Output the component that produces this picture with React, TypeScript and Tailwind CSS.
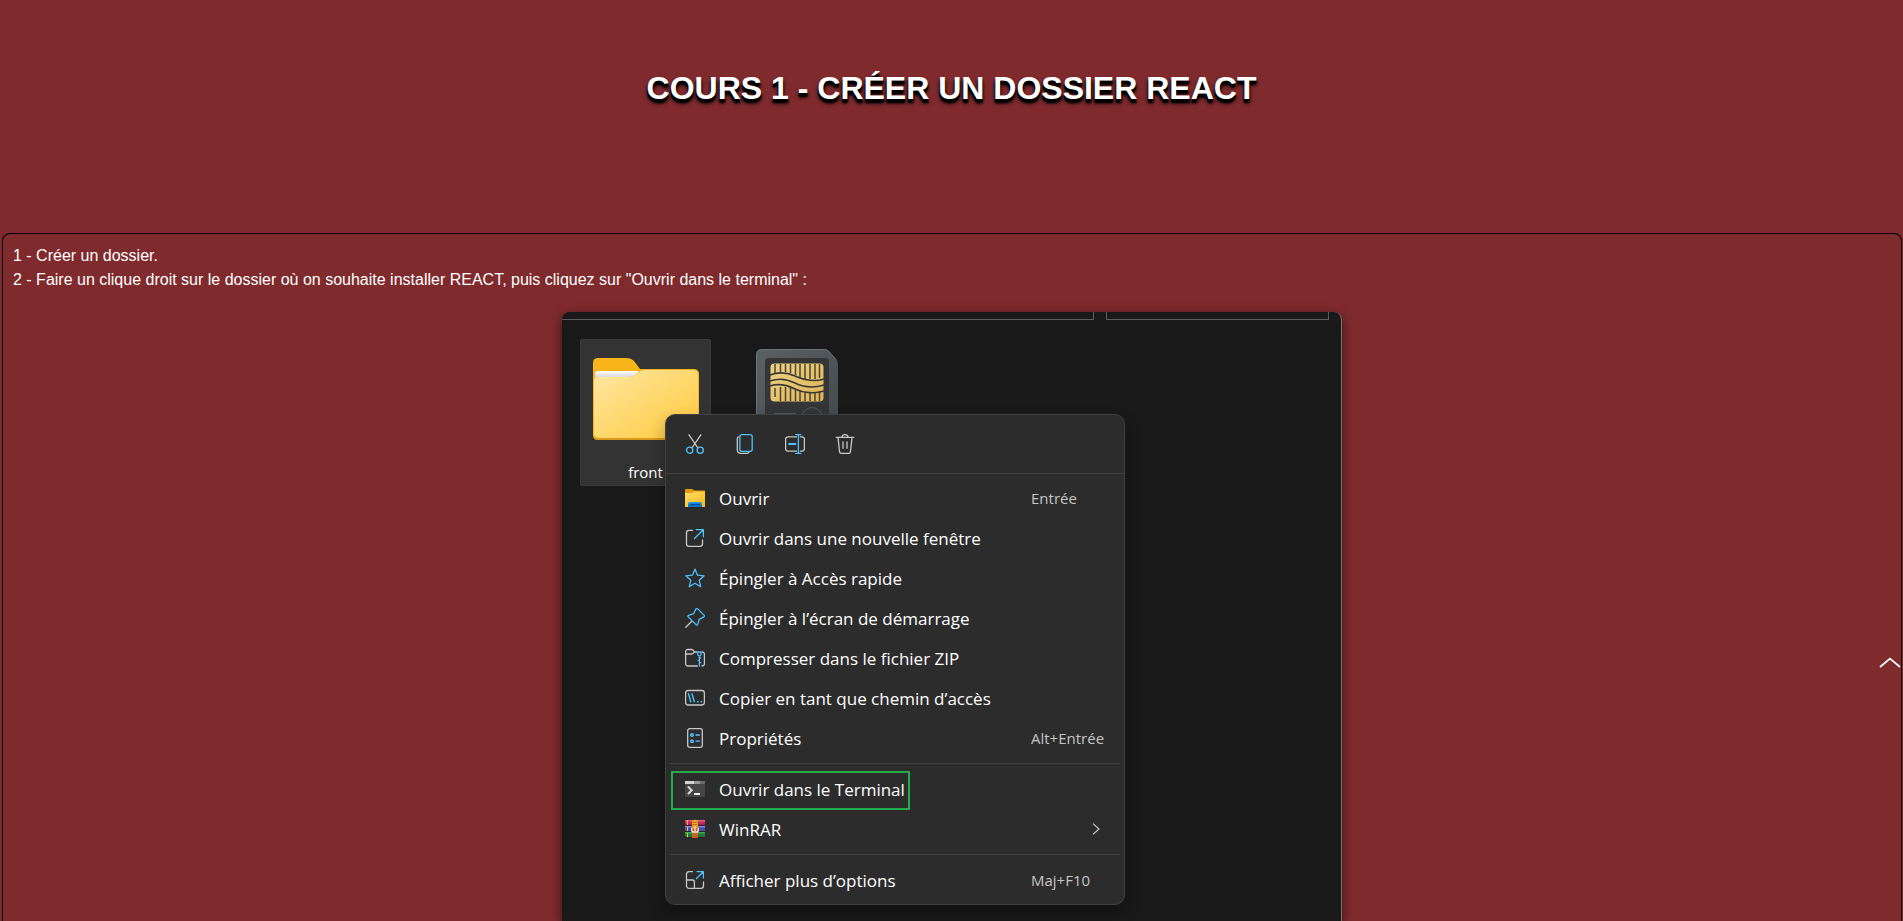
import type { ReactNode } from "react";

const ice = "#4cc2ff";
const ash = "#c8c8c8";

function Icon({ children }: { children: ReactNode }) {
  return (
    <svg viewBox="0 0 20 20" className="size-5 shrink-0" fill="none" strokeWidth="1.3" strokeLinecap="round" strokeLinejoin="round" aria-hidden="true">
      {children}
    </svg>
  );
}

const CutIcon = () => (
  <Icon>
    <path d="M4 .8 12.9 14M15.8.8 7 14" stroke={ash} />
    <circle cx="4.7" cy="16.2" r="3.1" stroke={ice} />
    <circle cx="15.2" cy="16.2" r="3.1" stroke={ice} />
  </Icon>
);

const CopyIcon = () => (
  <Icon>
    <path d="M3.4 2.9C2.5 3.3 2.3 4 2.3 5v10.5c0 2.3 1.4 3.9 3.8 3.9h5.5c1.2 0 1.9-.4 2.3-1.2" stroke={ash} />
    <rect x="4.9" y=".7" width="12.3" height="16.6" rx="2" stroke={ice} />
  </Icon>
);

const RenameIcon = () => (
  <Icon>
    <path d="M11.4 2.8H3A2.4 2.4 0 0 0 .6 5.2v9.6A2.4 2.4 0 0 0 3 17.2h8.4M15.4 2.8H17a2.4 2.4 0 0 1 2.4 2.4v9.6a2.4 2.4 0 0 1-2.4 2.4h-1.6" stroke={ash} />
    <path d="M10.9.6h5M10.9 19.4h5M13.4.6v18.8" stroke={ice} />
    <path d="M4 10h6.5" stroke={ice} strokeWidth="1.8" />
  </Icon>
);

const DeleteIcon = () => (
  <Icon>
    <path d="M1.2 3.3h17.6M6.8 3.1C7 1.5 8.200.6 10 .6s3 .9 3.200 2.500M3 3.5l1.500 14c.1 1.2.9 1.9 2 1.9h7c1.1 0 1.9-.7 2-1.9l1.500-14M8 8v6.300M12 8v6.300" stroke={ash} />
  </Icon>
);

const FolderOpenIcon = () => (
  <Icon>
    <defs>
      <linearGradient id="small-folder" x1="0" y1="0" x2="1" y2="1">
        <stop offset="0" stopColor="#ffdc6a" />
        <stop offset="1" stopColor="#fbb917" />
      </linearGradient>
      <linearGradient id="blue-tray" x1="0" y1="0" x2="0" y2="1">
        <stop offset="0" stopColor="#1e96e6" />
        <stop offset="1" stopColor="#0a6cc4" />
      </linearGradient>
    </defs>
    <path d="M0 1.5Q0 1 .7 1h6.500l2 1.400H20V6H0z" fill="#e09b05" />
    <path d="M0 5h7l1.800-1.400H20V19H0z" fill="url(#small-folder)" />
    <path d="M3 19v-3q0-2 2-2h10q2 0 2 2v3z" fill="url(#blue-tray)" />
    <path d="M5.500 16.600h9" stroke="#06458a" strokeWidth="1" />
  </Icon>
);

const NewWindowIcon = () => (
  <Icon>
    <path d="M7.500 2.400H4A2.600 2.600 0 0 0 1.500 5v10.800A2.600 2.600 0 0 0 4 18.400h11a2.600 2.600 0 0 0 2.500-2.600V12" stroke={ash} />
    <path d="M11.200 1.600h7.200v7.200M18.200 1.800 9.500 10.500" stroke={ice} />
  </Icon>
);

const StarIcon = () => (
  <Icon>
    <path d="m10 1.200 2.600 6 6.600.6-5 4.400 1.500 6.500-5.700-3.400-5.700 3.400 1.500-6.500-5-4.400 6.600-.6z" stroke={ice} />
  </Icon>
);

const PinIcon = () => (
  <Icon>
    <path d="M.8 19.200 6.500 13.500" stroke={ash} />
    <path d="M11 .9c.5-.5 1.300-.5 1.800 0l6.200 6.200c.6.6.5 1.400-.2 1.800l-4.600 2.500-1.500 5c-.3.900-.9 1-1.500.4L3.200 8.900c-.6-.6-.4-1.300.4-1.500l5-1.700z" stroke={ice} />
  </Icon>
);

const ZipIcon = () => (
  <Icon>
    <path d="M12 4H9.500L8 2.200C7.600 1.700 7 1.500 6.400 1.500H2.800A2.200 2.200 0 0 0 .6 3.700v12.100A2.200 2.200 0 0 0 2.800 18h9.500M.7 6h6c1.200 0 1.700-.5 2.600-1.800M17 4a2.300 2.300 0 0 1 2.400 2.200v9.600A2.200 2.200 0 0 1 17.200 18H17" stroke={ash} />
    <path d="M12.800 4v2.500c0 1 .5 1.500 1.600 1.500s1.600-.5 1.600-1.500V4zM14.400 8v10M14.400 10h1.400M13 12.300h1.400M14.400 14.700h1.400" stroke={ice} />
  </Icon>
);

const PathIcon = () => (
  <Icon>
    <rect x=".6" y="2.500" width="18.800" height="14.500" rx="2.400" stroke={ash} />
    <path d="m3.500 5.800 2.300 8M7 5.800l2.300 8M12.500 13.800h.6M16 13.800h.6" stroke={ice} strokeWidth="1.400" />
  </Icon>
);

const PropertiesIcon = () => (
  <Icon>
    <rect x="2.700" y=".6" width="14.600" height="18.800" rx="2" stroke={ash} />
    <path d="M11 7h3.500M11 13.200h3.500" stroke={ice} />
    <circle cx="7" cy="7" r="1.300" stroke={ice} strokeWidth="1.500" />
    <circle cx="7" cy="13.200" r="1.300" stroke={ice} strokeWidth="1.500" />
  </Icon>
);

const TerminalIcon = () => (
  <Icon>
    <path d="M0 2h20v16H0z" fill="#454545" />
    <path d="M0 2h9.500v3H0z" fill="#d2d2d2" />
    <path d="M9.500 2H15v3H9.500z" fill="#9a9a9a" />
    <path d="M15 2h5v3h-5z" fill="#6c6c6c" />
    <path d="m3 7.500 3.700 3.700L3 15" stroke="#d5d5d5" strokeWidth="2" strokeLinecap="butt" strokeLinejoin="miter" />
    <path d="M9 15h6" stroke="#fff" strokeWidth="1.800" strokeLinecap="butt" />
  </Icon>
);

const WinrarIcon = () => (
  <Icon>
    <path d="M0 1h20v6H0z" fill="#c4285c" />
    <path d="M0 1h20v1.500H0z" fill="#e65b88" />
    <path d="M0 7h20v6H0z" fill="#4a4aa8" />
    <path d="M0 7h20v1.500H0z" fill="#8283d2" />
    <path d="M0 13h20v6H0z" fill="#1b7a35" />
    <path d="M0 13h20v1.500H0z" fill="#45aa58" />
    <path d="M0 6.300h20M0 12.500h20M0 18.500h20" stroke="#251c2c" strokeWidth="1.100" strokeLinecap="butt" />
    <path d="M2.500 2v3.500M2.500 8.200v3.500M2.500 14.400v3.500" stroke="#e8c534" strokeWidth="1" />
    <path d="M7 1h6v18H7z" fill="#c9621c" />
    <path d="M7.300 1.500Q10 0 12.700 1.500V9H7.300z" fill="#efad29" />
    <path d="M8.500 3.300h3M8.500 5.600h3" stroke="#a85b10" strokeWidth=".9" />
    <path d="M6.800 9.500v2.500q0 1 1 1h4.400q1 0 1-1V9.500" stroke="#ededed" strokeWidth="1.300" />
    <path d="M10 8.500v3" stroke="#fff0b0" strokeWidth="1.300" />
  </Icon>
);

const MoreIcon = () => (
  <Icon>
    <path d="M7.500 1.600H4.200a2.600 2.600 0 0 0-2.700 2.600v11.600a2.600 2.600 0 0 0 2.600 2.600h11.800a2.600 2.600 0 0 0 2.600-2.600V12M1.500 10h6.300c1 0 1.600.6 1.600 1.600v6.800" stroke={ash} />
    <path d="M12 1.600h6.400v6.500M18 2l-6.500 6.500" stroke={ice} />
  </Icon>
);

function FolderPicture() {
  return (
    <svg viewBox="0 0 106 84" className="h-[84px] w-[106px]" aria-hidden="true">
      <defs>
        <linearGradient id="folder-front" x1="0" y1="0" x2="1" y2="1">
          <stop offset="0" stopColor="#ffe7a2" />
          <stop offset="1" stopColor="#ffc93c" />
        </linearGradient>
        <linearGradient id="folder-paper" x1="0" y1="0" x2="0" y2="1">
          <stop offset="0" stopColor="#fff" />
          <stop offset="1" stopColor="#d9d9d9" />
        </linearGradient>
      </defs>
      <path d="M0 6Q0 1 5 1h28q5 0 8 3l6 8h53q6 0 6 5v61q0 5-5 5H5q-5 0-5-5z" fill="#f9b51a" />
      <path d="M2 17q0-3 3-3h41q-4 6-11 6H2z" fill="url(#folder-paper)" />
      <path d="M1 24q0-4 4-4h31q5 0 9-4 3-3 7-3h48q5 0 5 4v60q0 4-4 4H5q-4 0-4-4z" fill="url(#folder-front)" />
      <path d="M1 78q1 5 5 5h94q4 0 5-5-1 3-5 3H6q-4 0-5-3z" fill="#d99a1a" />
    </svg>
  );
}

function CardPicture() {
  return (
    <svg viewBox="0 0 84 84" className="h-[84px] w-[84px]" fill="none" aria-hidden="true">
      <defs>
        <linearGradient id="card-shell" x1="0" y1="0" x2="1" y2="1">
          <stop offset="0" stopColor="#5c6165" />
          <stop offset="1" stopColor="#43484d" />
        </linearGradient>
        <linearGradient id="card-chip" x1="0" y1="0" x2="1" y2="1">
          <stop offset="0" stopColor="#ecd486" />
          <stop offset="1" stopColor="#dfb356" />
        </linearGradient>
      </defs>
      <path d="M1 7q0-6 6-6h62q3 0 5 2l7 8q2 2 2 5v68H1z" fill="url(#card-shell)" />
      <path d="M1.500 84V7q0-5.500 5.500-5.500h62q3 0 5 2l7 8" stroke="#777c80" strokeWidth=".7" />
      <path d="M10 84V14q0-4 4-4h56q4 0 4 4v70z" fill="#333537" />
      <rect x="15.500" y="15.500" width="53" height="38" rx="4" fill="url(#card-chip)" />
      <path
        d="M20 16v9M25.500 16v8M30.500 16v8M35.500 16v9M40.500 16v11M45 16v14M50 16v15M55 16v15M60 16v15M64.500 16v14M20 40v9M25.500 39v14M30.500 39v14M35.500 40v13M40.500 42v11M45 43v10M50 44v9M55 44v9M60 44v9M64.500 43v10"
        stroke="#4b4534"
        strokeWidth="1.500"
      />
      <path d="M15 27c8-3 16-3 25 1s20 6 29 3M15 33c9-3 17-2 25 2s19 5 29 2M15 38c9-3 17-1 25 3s20 5 29 2" stroke="#3b3935" strokeWidth="1.600" />
      <path d="M19 65.500h22" stroke="#55585a" />
      <circle cx="57" cy="70" r="10.500" stroke="#55585a" />
    </svg>
  );
}

type Entry = { label: string; icon: ReactNode; shortcut?: string; arrow?: boolean; framed?: boolean };

const groups: Entry[][] = [
  [
    { label: "Ouvrir", icon: <FolderOpenIcon />, shortcut: "Entrée" },
    { label: "Ouvrir dans une nouvelle fenêtre", icon: <NewWindowIcon /> },
    { label: "Épingler à Accès rapide", icon: <StarIcon /> },
    { label: "Épingler à l’écran de démarrage", icon: <PinIcon /> },
    { label: "Compresser dans le fichier ZIP", icon: <ZipIcon /> },
    { label: "Copier en tant que chemin d’accès", icon: <PathIcon /> },
    { label: "Propriétés", icon: <PropertiesIcon />, shortcut: "Alt+Entrée" },
  ],
  [
    { label: "Ouvrir dans le Terminal", icon: <TerminalIcon />, framed: true },
    { label: "WinRAR", icon: <WinrarIcon />, arrow: true },
  ],
  [{ label: "Afficher plus d’options", icon: <MoreIcon />, shortcut: "Maj+F10" }],
];

const tools = [
  { label: "Couper", icon: <CutIcon /> },
  { label: "Copier", icon: <CopyIcon /> },
  { label: "Renommer", icon: <RenameIcon /> },
  { label: "Supprimer", icon: <DeleteIcon /> },
];

function MenuRow({ entry }: { entry: Entry }) {
  return (
    <li className="relative">
      <button type="button" className="flex h-10 w-full items-center gap-3.5 pl-[19px] text-left">
        {entry.icon}
        <span className="grow pt-0.5 text-[17px] text-white">{entry.label}</span>
        {entry.shortcut && <span className="w-[93px] text-[15px] text-[#c4c4c4]">{entry.shortcut}</span>}
        {entry.arrow && (
          <svg viewBox="0 0 8 12" className="mr-6 h-3 w-2" fill="none" stroke={ash} strokeWidth="1.200" aria-hidden="true">
            <path d="m1 .6 6 5.400-6 5.400" />
          </svg>
        )}
      </button>
      {entry.framed && <span className="pointer-events-none absolute top-0.5 left-[5px] h-[39px] w-[239px] border-2 border-[#22ac4a]" />}
    </li>
  );
}

function ContextMenu() {
  return (
    <div className="absolute top-[102px] left-[103px] w-[460px] rounded-[10px] border border-[#404040] bg-[#2c2c2c] pb-1 shadow-[0_8px_16px_rgba(0,0,0,0.3)]">
      <div className="flex h-[59px] items-center gap-[30px] border-b border-[#404040] pl-[19px]">
        {tools.map((tool) => (
          <button key={tool.label} type="button" aria-label={tool.label}>
            {tool.icon}
          </button>
        ))}
      </div>
      <div className="pt-1">
        {groups.map((group, index) => (
          <div key={index}>
            {index > 0 && <hr className="mx-1 my-[5px] border-[#404040]" />}
            <ul>
              {group.map((entry) => (
                <MenuRow key={entry.label} entry={entry} />
              ))}
            </ul>
          </div>
        ))}
      </div>
    </div>
  );
}

function Explorer() {
  return (
    <div className="relative mx-auto mt-5 min-h-[609px] w-[780px] flex-1 rounded-t-lg border-r border-[#777] bg-[#191919] font-['Open_Sans','Noto_Sans',sans-serif] shadow-[0_4px_12px_rgba(0,0,0,0.6)]">
      <div className="flex h-2 gap-3 pr-3">
        <div className="grow border-r border-b border-[#5c5c5c]" />
        <div className="w-[223px] border border-t-0 border-[#5c5c5c]" />
      </div>
      <div className="flex gap-11 pt-[19px] pl-[18px]">
        <div className="flex h-[147px] w-[131px] flex-col items-center justify-between rounded-xs border border-[#3a3a3a] bg-[#333] pt-[17px] pb-px text-[15px] leading-6 text-white">
          <FolderPicture />
          front
        </div>
        <div className="pt-[9px]">
          <CardPicture />
        </div>
      </div>
      <ContextMenu />
    </div>
  );
}

export default function App() {
  return (
    <div className="flex min-h-screen flex-col overflow-hidden bg-[#7f2a2d] font-['Liberation_Sans',Arial,sans-serif] text-base text-white">
      <header className="flex h-[233px] justify-center pt-[68px]">
        <h1 className="text-[32px] leading-10 font-bold [text-shadow:0_4px_2px_#000,0_4px_4px_#000,0_3px_1px_#000]">COURS 1 - CRÉER UN DOSSIER REACT</h1>
      </header>
      <main className="mr-px ml-0.5 flex flex-1 flex-col rounded-t-lg border border-b-0 border-black px-[10px] pt-[10px]">
        <p>1 - Créer un dossier.</p>
        <p>2 - Faire un clique droit sur le dossier où on souhaite installer REACT, puis cliquez sur "Ouvrir dans le terminal" :</p>
        <Explorer />
      </main>
      <a href="#" aria-label="Haut de page" className="fixed right-0.5 bottom-[253px]">
        <svg viewBox="0 0 22 11" className="h-[11px] w-[22px]" fill="none" stroke="#fff" strokeWidth="1.700" aria-hidden="true">
          <path d="m1 10 10-8.500L21 10" />
        </svg>
      </a>
    </div>
  );
}
